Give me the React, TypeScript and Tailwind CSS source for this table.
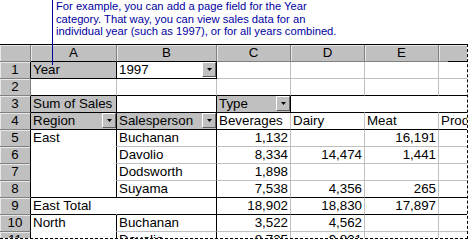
import React from 'react';

const RB = 'border-r border-r-black';
const RG = 'border-r border-r-[#c0c0c0]';
const RW = 'border-r border-r-white';
const RN = '';
const BB = 'border-b border-b-black';
const BG = 'border-b border-b-[#c0c0c0]';
const BW = 'border-b border-b-white';

const W = ['w-[86px] shrink-0', 'w-[100px] shrink-0', 'w-[74px] shrink-0', 'w-[74px] shrink-0', 'w-[74px] shrink-0', 'flex-1 min-w-0'];

function DropDown() {
  return (
    <span className="w-[14px] h-[15px] shrink-0 self-start bg-[#c0c0c0] border border-t-white border-l-white border-r-[#606060] border-b-[#606060] flex items-center justify-center">
      <svg width="5" height="3" viewBox="0 0 5 3">
        <polygon points="0,0 5,0 2.5,3" fill="#000" />
      </svg>
    </span>
  );
}

function Cell({ w, r, b, bg = 'bg-white', num = false, dd = false, children }: any) {
  return (
    <div
      className={`${w} ${r} ${b} ${bg} h-full flex items-center overflow-hidden whitespace-nowrap ${num ? 'justify-end pr-[2px]' : 'justify-between pl-[2px]'}`}
    >
      <span>{children}</span>
      {dd && <DropDown />}
    </div>
  );
}

function RowHead({ n, r = 'border-r-black' }: any) {
  return (
    <div className={`w-[31px] shrink-0 h-full border-r ${r} border-b border-b-[#808080] bg-[#c0c0c0] shadow-[inset_1px_1px_0_#e8e8e8] flex items-center justify-center`}>
      {n}
    </div>
  );
}

type C = { t?: string; r: string; b: string; bg?: string; num?: boolean; dd?: boolean };

const rows: { n: number; hr?: string; cells: C[] }[] = [
  {
    n: 1,
    cells: [
      { t: 'Year', r: RB, b: BB, bg: 'bg-[#c0c0c0]' },
      { t: '1997', r: RB, b: BB, dd: true },
      { r: RG, b: BG },
      { r: RG, b: BG },
      { r: RG, b: BG },
      { r: RN, b: BG },
    ],
  },
  {
    n: 2,
    hr: 'border-r-[#808080]',
    cells: [
      { r: RG, b: BB },
      { r: RG, b: BB },
      { r: RG, b: BB },
      { r: RG, b: BB },
      { r: RG, b: BB },
      { r: RN, b: BB },
    ],
  },
  {
    n: 3,
    cells: [
      { t: 'Sum of Sales', r: RB, b: BB, bg: 'bg-[#c0c0c0]' },
      { r: RB, b: BB },
      { t: 'Type', r: RB, b: BB, bg: 'bg-[#c0c0c0]', dd: true },
      { r: RW, b: BB },
      { r: RW, b: BB },
      { r: RN, b: BB },
    ],
  },
  {
    n: 4,
    cells: [
      { t: 'Region', r: RB, b: BB, bg: 'bg-[#c0c0c0]', dd: true },
      { t: 'Salesperson', r: RB, b: BB, bg: 'bg-[#c0c0c0]', dd: true },
      { t: 'Beverages', r: RG, b: BB },
      { t: 'Dairy', r: RG, b: BB },
      { t: 'Meat', r: RG, b: BB },
      { t: 'Produce', r: RN, b: BB },
    ],
  },
  {
    n: 5,
    cells: [
      { t: 'East', r: RB, b: BW },
      { t: 'Buchanan', r: RB, b: BG },
      { t: '1,132', r: RG, b: BG, num: true },
      { r: RG, b: BG },
      { t: '16,191', r: RG, b: BG, num: true },
      { r: RN, b: BG },
    ],
  },
  {
    n: 6,
    cells: [
      { r: RB, b: BW },
      { t: 'Davolio', r: RB, b: BG },
      { t: '8,334', r: RG, b: BG, num: true },
      { t: '14,474', r: RG, b: BG, num: true },
      { t: '1,441', r: RG, b: BG, num: true },
      { r: RN, b: BG },
    ],
  },
  {
    n: 7,
    cells: [
      { r: RB, b: BW },
      { t: 'Dodsworth', r: RB, b: BG },
      { t: '1,898', r: RG, b: BG, num: true },
      { r: RG, b: BG },
      { r: RG, b: BG },
      { r: RN, b: BG },
    ],
  },
  {
    n: 8,
    cells: [
      { r: RB, b: BB },
      { t: 'Suyama', r: RB, b: BB },
      { t: '7,538', r: RG, b: BB, num: true },
      { t: '4,356', r: RG, b: BB, num: true },
      { t: '265', r: RG, b: BB, num: true },
      { r: RN, b: BB },
    ],
  },
  {
    n: 9,
    cells: [
      { t: 'East Total', r: RW, b: BB },
      { r: RB, b: BB },
      { t: '18,902', r: RG, b: BB, num: true },
      { t: '18,830', r: RG, b: BB, num: true },
      { t: '17,897', r: RG, b: BB, num: true },
      { r: RN, b: BB },
    ],
  },
  {
    n: 10,
    cells: [
      { t: 'North', r: RB, b: BW },
      { t: 'Buchanan', r: RB, b: BG },
      { t: '3,522', r: RG, b: BG, num: true },
      { t: '4,562', r: RG, b: BG, num: true },
      { r: RG, b: BG },
      { r: RN, b: BG },
    ],
  },
  {
    n: 11,
    cells: [
      { r: RB, b: BW },
      { t: 'Davolio', r: RB, b: BG },
      { t: '8,735', r: RG, b: BG, num: true },
      { t: '9,801', r: RG, b: BG, num: true },
      { r: RG, b: BG },
      { r: RN, b: BG },
    ],
  },
];

const letters = ['A', 'B', 'C', 'D', 'E', ''];

export default function App() {
  return (
    <div className="relative w-[469px] h-[240px] bg-white overflow-hidden font-['Liberation_Sans',Arial,sans-serif] text-black">
      {/* callout text */}
      <div className="h-[44px] pl-[56px] pt-0 text-[11.2px] leading-[12.6px] text-[#0000a0] whitespace-nowrap">
        <p>For example, you can add a page field for the Year</p>
        <p>category. That way, you can view sales data for an</p>
        <p>individual year (such as 1997), or for all years combined.</p>
      </div>

      {/* sheet */}
      <div className="w-[468px] h-[195px] border-r border-b border-dashed border-black overflow-hidden text-[13.33px] leading-[16px]">
        <div className="h-[18px] flex border-t border-t-black">
          <div className="w-[31px] shrink-0 h-full bg-[#c0c0c0] border-r border-r-[#808080] border-b border-b-[#808080] shadow-[inset_1px_1px_0_#e8e8e8]" />
          {letters.map((l, i) => (
            <div
              key={i}
              className={`${W[i]} h-full bg-[#c0c0c0] shadow-[inset_1px_1px_0_#e8e8e8] flex items-center justify-center ${i < 5 ? 'border-r border-r-[#808080]' : ''} ${i < 2 ? 'border-b border-b-black' : 'border-b border-b-[#808080]'}`}
            >
              {l}
            </div>
          ))}
        </div>
        {rows.map((row) => (
          <div key={row.n} className="h-[17px] flex">
            <RowHead n={row.n} r={row.hr} />
            {row.cells.map((c, i) => (
              <Cell key={i} w={W[i]} r={c.r} b={c.b} bg={c.bg} num={c.num} dd={c.dd}>
                {c.t}
              </Cell>
            ))}
          </div>
        ))}
      </div>

      {/* callout pointer */}
      <div className="absolute left-[52px] top-0 w-px h-[65px] bg-[#0000a0]" />
      <div className="absolute left-[448px] top-[61px] w-[19px] h-px bg-black" />
    </div>
  );
}
